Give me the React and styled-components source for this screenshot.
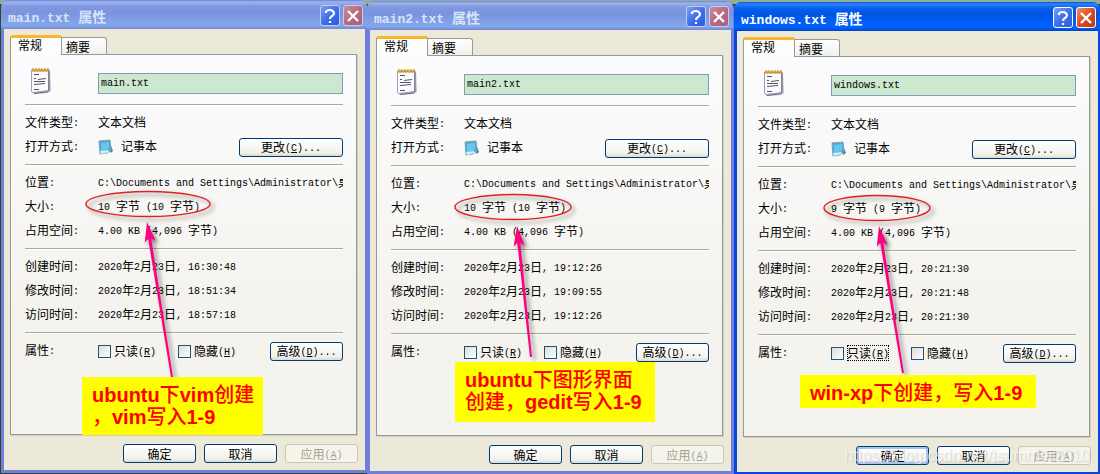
import React from "react";
import styled, { createGlobalStyle, css } from "styled-components";

const GlobalStyle = createGlobalStyle`
  *, *::before, *::after { box-sizing: border-box; }
  body {
    margin: 0;
    background: linear-gradient(#93ad9c 0, #93ad9c 4px, #34452f 4px);
    font: 12px/16px "Noto Sans CJK SC", sans-serif;
    color: #000;
  }
  button, input { font: inherit; color: inherit; margin: 0; }
`;

/* Half-width characters take half of a Chinese character's 12px cell. */
const Half = styled.span`
  font-family: "Liberation Mono", monospace;
  font-size: 10px;
  line-height: 1;
  vertical-align: 1px;
  white-space: pre;
  ${(p) => p.$title && css`
    font-size: 13px;
    vertical-align: baseline;
  `}
`;

function Mixed({ children, title }) {
  return children.split(/([\x20-\x7e]+)/).filter(Boolean).map((part, i) =>
    /^[\x20-\x7e]/.test(part) ? <Half key={i} $title={title}>{part}</Half> : part
  );
}

const Desktop = styled.main`
  display: grid;
  grid-template-columns: 366fr 367fr 366fr;
  align-items: start;
  padding-left: 1px;
  overflow: hidden;
`;

const Dialog = styled.section`
  position: relative;
  min-width: 0;
  margin-top: ${(p) => p.$drop}px;
  background: #ece9d8;
  border: solid ${(p) => (p.$active ? "#0a46dd" : "#6f7fdb")};
  border-width: ${(p) => (p.$active ? "0 2px 2px 3px" : `0 ${p.$drop + 2}px 3px 3px`)};
  border-radius: 8px 8px 0 0;
`;

const TitleBar = styled.header`
  display: flex;
  align-items: center;
  gap: 3px;
  height: 29px;
  margin: 0 -2px 0 -3px;
  padding: 2px 4px 0 7px;
  border-radius: 7px 7px 0 0;
  color: ${(p) => (p.$active ? "#fff" : "#d8e4f8")};
  background: ${(p) =>
    p.$active
      ? "linear-gradient(#0a50d8 0, #2a86ff 2px, #0660f0 6px, #0054e3 13px, #0062ff 22px, #0060fc 26px, #0040c4)"
      : "linear-gradient(#6c82d6 0, #9db4f0 2px, #8299e0 6px, #7a93df 13px, #82a3e8 22px, #84a6ea 26px, #7284d8)"};
`;

const Title = styled.h1`
  flex: 1;
  margin: 0;
  font-size: 14px;
  line-height: 20px;
  font-weight: 700;
  white-space: nowrap;
`;

const CaptionButton = styled.button`
  display: flex;
  align-items: center;
  justify-content: center;
  width: 20px;
  height: 21px;
  padding: 0;
  border: 1px solid ${(p) => (p.$active ? "#fff" : "#c3cdf0")};
  border-radius: 3px;
  background: ${(p) =>
    p.$close
      ? p.$active
        ? "linear-gradient(135deg, #f0906c, #dc4a22 50%, #c03a14)"
        : "linear-gradient(135deg, #c98c9c, #b86a7e 50%, #a8607c)"
      : "linear-gradient(135deg, #7ba0f4, #3f70ea 50%, #2c5ae0)"};
`;

const Tabs = styled.nav`
  display: flex;
  align-items: flex-end;
  padding: 6px 6px 0;
`;

const Tab = styled.button`
  position: relative;
  display: flex;
  align-items: center;
  width: 45px;
  height: 17px;
  padding: 2px 4px 0;
  border: 1px solid #919b9c;
  border-bottom: 0;
  border-left: 0;
  border-radius: 0 3px 0 0;
  background: linear-gradient(#fff, #f0f0ea);
  white-space: nowrap;
  ${(p) => p.$selected && css`
    z-index: 1;
    width: 52px;
    height: 20px;
    margin-bottom: -1px;
    padding: 0 7px 3px;
    border: 1px solid #919b9c;
    border-top: 3px solid #fbb52c;
    border-bottom: 0;
    border-radius: 3px 3px 0 0;
    background: #fdfdfe;
  `}
`;

const Panel = styled.div`
  margin: 0 8px 0 6px;
  padding: 0 13px 72px 14px;
  border: 1px solid #919b9c;
  background: linear-gradient(#fcfcfe, #f4f3ee 65%);
  box-shadow: 1px 1px 0 #d0cebf;
`;

const FileHeader = styled.div`
  display: grid;
  grid-template-columns: 73px 1fr;
  align-items: end;
  padding: 12px 0 4px;
`;

const IconSlot = styled.div`
  display: flex;
  padding-left: 5px;
`;

const NameInput = styled.input`
  width: 100%;
  min-width: 0;
  height: 21px;
  padding: 0 2px 1px;
  border: 1px solid #7f9db9;
  border-radius: 0;
  background: #cce8cf;
  font-family: "Liberation Mono", monospace;
  font-size: 10px;
`;

const Divider = styled.hr`
  height: 2px;
  margin: 6px 0 4px;
  border: solid;
  border-width: 1px 0;
  border-color: #aca899 transparent #fff;
`;

const Row = styled.div`
  display: flex;
  align-items: center;
  height: 24px;
  padding-top: 2px;
  white-space: nowrap;
`;

const Name = styled.span`
  flex: 0 0 73px;
  padding-bottom: 2px;
`;

const Value = styled.span`
  display: flex;
  align-items: center;
  gap: 7px;
  flex: 1;
  min-width: 0;
  overflow: hidden;
`;

const Text = styled.span`
  flex: none;
  padding-bottom: 2px;
`;

const Button = styled.button`
  flex: none;
  width: ${(p) => (p.$wide ? 104 : 73)}px;
  height: 19px;
  padding: 0;
  border: 1px solid #003c74;
  border-radius: 3px;
  background: linear-gradient(#fff, #f2f1ec 80%, #dcd8cc);
  line-height: 16px;
  white-space: nowrap;
  ${(p) => p.$default && css`box-shadow: inset 0 0 0 2px #a9c4f2;`}
  &:disabled {
    color: #a1a192;
    border-color: #c9c7ba;
    background: #f5f4ea;
  }
`;

const Checks = styled.div`
  display: flex;
  flex: 1;
`;

const CheckLabel = styled.label`
  display: flex;
  align-items: center;
  gap: 3px;
  width: 80px;
`;

const Checkbox = styled.input`
  appearance: none;
  width: 13px;
  height: 13px;
  border: 1px solid #1c5180;
  background: linear-gradient(135deg, #dcdcd7, #fff);
`;

const CheckText = styled.span`
  outline: ${(p) => (p.$focused ? "1px dotted #000" : "none")};
  outline-offset: -1px;
`;

const Footer = styled.footer`
  display: flex;
  justify-content: flex-end;
  gap: 8px;
  padding: 9px 7px 7px;
`;

const Markup = styled.svg`
  position: absolute;
  top: 0;
  left: -3px;
  overflow: visible;
  pointer-events: none;
  filter: drop-shadow(3px 3px 2px rgba(0, 0, 0, 0.45));
`;

const Note = styled.p`
  position: absolute;
  left: ${(p) => p.$x - 3}px;
  top: ${(p) => p.$y}px;
  margin: 0;
  padding: 6px ${(p) => p.$end}px ${(p) => p.$bottom}px 10px;
  background: #ff0;
  color: #f00;
  font: 500 20px/22px "Noto Sans CJK SC", sans-serif;
  white-space: nowrap;
  b {
    font-family: "Liberation Sans", sans-serif;
    font-weight: 700;
    line-height: 1;
  }
`;

const Watermark = styled.p`
  position: absolute;
  right: 8px;
  bottom: 6px;
  margin: 0;
  color: rgba(255, 255, 255, 0.6);
  font: 16px/20px "Liberation Sans", sans-serif;
  text-shadow: 1px 1px 1px rgba(120, 120, 110, 0.25);
  pointer-events: none;
`;

const NotepadIcon = () => (
  <svg width="22" height="27" viewBox="0 0 22 27" aria-hidden="true">
    <path d="M2 4 20 3l1 21-3 2-14 1-2-2z" fill="#c4c3cc" />
    <path d="M1.500 3 18.500 3v20.500L3 25.500l-1.500-1z" fill="#fbfbff" stroke="#9c9cc4" />
    <path d="M19 3.500v20l-2 1.500L4 26.500" fill="none" stroke="#6a6a78" />
    <path d="M2 3.500h16" stroke="#8a76a4" strokeWidth="1.500" />
    <path d="m2 5 1-4 1 4 2-4 1 4 2-4 1 4 2-4 1 4 2-4 1 4 2-4 1 3" fill="none" stroke="#e0ac20" />
    <path d="M4 7.500h5M4 11.500l2 0M8 12.500l8-1M4 14.500h11M4 17.500l11-1M4 22.500h5" stroke="#555" fill="none" />
  </svg>
);

const AppIcon = () => (
  <svg width="16" height="16" viewBox="0 0 16 16" aria-hidden="true">
    <path d="m12 4 3 8-3 2z" fill="#4a7f9c" />
    <path d="m1 2 11-1 1 10-4 3-7 1z" fill="#48a9dc" stroke="#77a6bf" />
    <path d="m3 4 8-1v7l-8 2z" fill="#69c7ee" />
    <path d="m2 12 8-1 1 2-8 2z" fill="#d7ecf4" />
    <path d="M2 2h10" stroke="#a49b72" strokeDasharray="1 1" />
  </svg>
);

const HelpIcon = () => (
  <svg width="14" height="16" viewBox="0 0 14 16" aria-hidden="true">
    <path d="M3 5V3.500Q4 2 7 2t4 3q0 2-2 3T7 11M7 13v2" fill="none" stroke="#fff" strokeWidth="2.200" />
  </svg>
);

const CloseIcon = () => (
  <svg width="14" height="14" viewBox="0 0 14 14" aria-hidden="true">
    <path d="m2 2 10 10M12 2 2 12" stroke="#fff" strokeWidth="2.400" />
  </svg>
);

function Arrow({ tip, tail }) {
  const dx = tail[0] - tip[0];
  const dy = tail[1] - tip[1];
  const length = Math.hypot(dx, dy);
  const angle = (Math.atan2(dy, dx) * 180) / Math.PI;
  return (
    <g transform={`translate(${tip[0]} ${tip[1]}) rotate(${angle})`} fill="#ff0080">
      <path d={`M0 0 20-5.500 17-1.500 ${length}-1V1L17 1.500 20 5.500z`} />
    </g>
  );
}

const Key = ({ children }) => <Half>(<u>{children}</u>)</Half>;

function NoteLine({ children }) {
  return children.split(/([\x20-\x7e]+)/).filter(Boolean).map((part, i) =>
    /^[\x20-\x7e]/.test(part) ? <b key={i}>{part}</b> : part
  );
}

const files = [
  {
    name: "main.txt", size: "10 字节 (10 字节)",
    times: ["16:30:48", "18:51:34", "18:57:18"],
    ring: [147, 204, 62], tip: [146, 222], tail: [171, 377],
    note: { x: 81, y: 377, end: 9, bottom: 8, lines: ["ubuntu下vim创建", "，vim写入1-9"] },
  },
  {
    name: "main2.txt", size: "10 字节 (10 字节)",
    times: ["19:12:26", "19:09:55", "19:12:26"],
    ring: [146, 206, 58], tip: [150, 225], tail: [164, 356],
    note: { x: 88, y: 361, end: 13, bottom: 10, lines: ["ubuntu下图形界面", "创建，gedit写入1-9"] },
  },
  {
    name: "windows.txt", size: "9 字节 (9 字节)", active: true,
    times: ["20:21:30", "20:21:48", "20:21:30"],
    ring: [143, 206, 53], tip: [145, 224], tail: [169, 371],
    note: { x: 66, y: 373, end: 14, bottom: 5, lines: ["win-xp下创建，写入1-9"] },
  },
];

const Field = ({ name, children }) => (
  <Row>
    <Name><Mixed>{`${name}:`}</Mixed></Name>
    <Value><Text><Mixed>{children}</Mixed></Text></Value>
  </Row>
);

function PropertiesDialog({ file, index }) {
  const { active, note, ring } = file;
  return (
    <Dialog $active={active} $drop={index}>
      <TitleBar $active={active}>
        <Title><Mixed title>{`${file.name} 属性`}</Mixed></Title>
        <CaptionButton $active={active} aria-label="帮助"><HelpIcon /></CaptionButton>
        <CaptionButton $active={active} $close aria-label="关闭"><CloseIcon /></CaptionButton>
      </TitleBar>
      <Tabs>
        <Tab $selected>常规</Tab>
        <Tab>摘要</Tab>
      </Tabs>
      <Panel>
        <FileHeader>
          <IconSlot><NotepadIcon /></IconSlot>
          <NameInput aria-label="文件名" defaultValue={file.name} />
        </FileHeader>
        <Divider />
        <Field name="文件类型">文本文档</Field>
        <Row>
          <Name><Mixed>打开方式:</Mixed></Name>
          <Value><AppIcon /><Text>记事本</Text></Value>
          <Button $wide>更改<Key>C</Key><Half>...</Half></Button>
        </Row>
        <Divider />
        <Field name="位置">{"C:\\Documents and Settings\\Administrator\\桌"}</Field>
        <Field name="大小">{file.size}</Field>
        <Field name="占用空间">4.00 KB (4,096 字节)</Field>
        <Divider />
        {["创建时间", "修改时间", "访问时间"].map((name, i) => (
          <Field key={name} name={name}>{`2020年2月23日, ${file.times[i]}`}</Field>
        ))}
        <Divider />
        <Row>
          <Name><Mixed>属性:</Mixed></Name>
          <Checks>
            <CheckLabel>
              <Checkbox type="checkbox" />
              <CheckText $focused={active}>只读<Key>R</Key></CheckText>
            </CheckLabel>
            <CheckLabel>
              <Checkbox type="checkbox" />
              <CheckText>隐藏<Key>H</Key></CheckText>
            </CheckLabel>
          </Checks>
          <Button>高级<Key>D</Key><Half>...</Half></Button>
        </Row>
      </Panel>
      <Footer>
        <Button $default={active}>确定</Button>
        <Button>取消</Button>
        <Button disabled>应用<Key>A</Key></Button>
      </Footer>
      <Markup width="366" height="470" aria-hidden="true">
        <ellipse cx={ring[0]} cy={ring[1]} rx={ring[2]} ry="12.500" fill="none" stroke="#e02020" strokeWidth="1.400" />
        <Arrow tip={file.tip} tail={file.tail} />
      </Markup>
      <Note $x={note.x} $y={note.y} $end={note.end} $bottom={note.bottom}>
        {note.lines.map((line, i) => (
          <React.Fragment key={line}>
            {i > 0 && <br />}
            <NoteLine>{line}</NoteLine>
          </React.Fragment>
        ))}
      </Note>
      {active && <Watermark>https://blog.csdn.net/tsummer2010</Watermark>}
    </Dialog>
  );
}

export default function App() {
  return (
    <>
      <GlobalStyle />
      <Desktop>
        {files.map((file, i) => <PropertiesDialog key={file.name} file={file} index={i} />)}
      </Desktop>
    </>
  );
}
